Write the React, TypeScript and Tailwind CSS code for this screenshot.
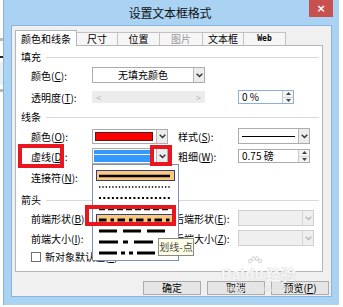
import React from 'react';

const F = "font-['Noto_Sans_CJK_SC','Noto_Sans',sans-serif]";

function Acc({ t, k, colon = true }: { t: string; k: string; colon?: boolean }) {
  return (
    <span className="whitespace-nowrap leading-none">
      {t}(<span className="underline underline-offset-1">{k}</span>){colon ? ':' : ''}
    </span>
  );
}

function Chevron({ color = '#333' }: { color?: string }) {
  return (
    <svg width="7" height="5" viewBox="0 0 7 5">
      <path d="M0.7 0.8 L3.5 3.6 L6.3 0.8" fill="none" stroke={color} strokeWidth="1.4" />
    </svg>
  );
}

function ArrowBtn({ disabled = false }: { disabled?: boolean }) {
  return (
    <div
      className={
        disabled
          ? 'w-[11px] h-full flex items-center justify-center border-l border-[#d6d6d6]'
          : 'w-[11px] h-full flex items-center justify-center border-l border-[#b8b8b8] bg-[#ececec]'
      }
    >
      <Chevron color={disabled ? '#b8b8b8' : '#333'} />
    </div>
  );
}

function SpinBtns() {
  return (
    <div className="w-[11px] h-full flex flex-col border-l border-[#c8c8c8] bg-[#f4f4f4]">
      <div className="flex-1 flex items-center justify-center border-b border-[#d4d4d4]">
        <svg width="5" height="3" viewBox="0 0 5 3"><path d="M0 3 L2.5 0 L5 3Z" fill="#444" /></svg>
      </div>
      <div className="flex-1 flex items-center justify-center">
        <svg width="5" height="3" viewBox="0 0 5 3"><path d="M0 0 L2.5 3 L5 0Z" fill="#444" /></svg>
      </div>
    </div>
  );
}

function Section({ t }: { t: string }) {
  return (
    <div className="h-[14px] flex items-center pl-[5px] pr-[3px]">
      <span className="leading-none">{t}</span>
      <div className="flex-1 ml-[5px] h-px bg-[#d9d9d9]" />
    </div>
  );
}

function Tab({ t, sel = false, w, dim = false, web = false }: { t: string; sel?: boolean; w: string; dim?: boolean; web?: boolean }) {
  return (
    <div
      className={
        (sel
          ? 'h-[16px] -mb-px bg-white border border-b-0 border-[#b4b4b4] relative z-10 '
          : 'h-[13px] bg-[#f6f6f6] border border-b-0 border-l-0 border-[#c2c2c2] ') +
        w +
        ' flex items-center justify-center'
      }
    >
      <span
        className={
          web
            ? "font-['DejaVu_Sans_Mono',monospace] font-bold text-[8px] leading-none"
            : dim
            ? 'text-[#9a9a9a] leading-none'
            : 'leading-none'
        }
      >
        {t}
      </span>
    </div>
  );
}

type Pat = { dash?: string; w: number; hl?: boolean };
const pats: Pat[] = [
  { w: 2.5, hl: true },
  { dash: '1.4 1.9', w: 1.6 },
  { dash: '2 2.3', w: 2 },
  { dash: '6 3', w: 2.5 },
  { dash: '7.5 4 3.5 3.5', w: 3, hl: true },
  { dash: '18 6', w: 3 },
  { dash: '19 5 5 6', w: 3 },
  { dash: '18 4 4 4 4 4', w: 3 },
];

function DropList() {
  return (
    <div className="absolute left-[92px] top-[164px] w-[87px] h-[97px] bg-white border border-[#7d8fb5] flex flex-col pt-[5px] px-[3px]">
      {pats.map((p, i) => (
        <div
          key={i}
          className={
            p.hl
              ? 'h-[11px] flex items-center px-[2px] bg-[#fbc87c] border border-[#34407a]'
              : 'h-[11px] flex items-center px-[3px]'
          }
        >
          <svg width="71" height="4" viewBox="0 0 71 4">
            <line x1="0" y1="2" x2="71" y2="2" stroke="#000" strokeWidth={p.w} strokeDasharray={p.dash} />
          </svg>
        </div>
      ))}
    </div>
  );
}

export default function App() {
  return (
    <div className={`relative w-[343px] h-[307px] bg-white overflow-hidden flex ${F} text-[10px] text-black`}>
      {/* document strip behind the dialog */}
      <div className="w-[3px] h-full flex flex-col bg-white">
        <div className="h-[38px]" />
        <div className="h-[3px] bg-[#b8b8b8]" />
        <div className="h-[15px]" />
        <div className="h-[2px] bg-[#222]" />
        <div className="h-[4px]" />
        <div className="h-[23px] bg-[#e6f0fa]" />
        <div className="h-[4px]" />
        <div className="h-[3px] bg-[#b8b8b8]" />
      </div>

      {/* window */}
      <div className="w-[336px] h-[305px] bg-[#a9d2f3] border-l border-[#83b6e2] flex flex-col">
        <div className="relative h-[25px] flex items-center justify-center">
          <span className="text-[12px] leading-none text-[#111] tracking-[-0.2px] mr-[3px]">设置文本框格式</span>
          <div className="absolute right-[6px] top-0 w-[24px] h-[17px] bg-[#c8504f] flex items-center justify-center">
            <span className="text-white text-[11px] font-bold leading-none font-['DejaVu_Sans',sans-serif]">×</span>
          </div>
        </div>

        <div className="ml-[7px] w-[321px] h-[272px] bg-[#f0f0f0] border border-[#86b5df] flex flex-col pl-[3px] pt-[4px]">
          {/* tabs */}
          <div className="h-[15px] flex items-end">
            <Tab t="颜色和线条" sel w="w-[62px]" />
            <Tab t="尺寸" w="w-[41px]" />
            <Tab t="位置" w="w-[42px]" />
            <Tab t="图片" w="w-[43px]" dim />
            <Tab t="文本框" w="w-[41px]" />
            <Tab t="Web" w="w-[42px]" web />
          </div>

          {/* panel */}
          <div className="w-[308px] h-[227px] bg-white border border-[#b6b6b6] flex flex-col pt-[4px]">
            <Section t="填充" />

            <div className="mt-[3px] h-[16px] flex items-center">
              <div className="w-[76px] pl-[15px]"><Acc t="颜色" k="C" /></div>
              <div className="w-[113px] h-[16px] border border-[#acacac] bg-white flex">
                <div className="flex-1 flex items-center justify-center"><span className="leading-none">无填充颜色</span></div>
                <ArrowBtn />
              </div>
            </div>

            <div className="mt-[6px] h-[16px] flex items-center">
              <div className="w-[76px] pl-[15px]"><Acc t="透明度" k="T" /></div>
              <div className="w-[113px] h-[12px] bg-[#ececec] flex items-center justify-between px-[4px] text-[#b4b4b4]">
                <span className="leading-none text-[9px]">&lt;</span>
                <span className="leading-none text-[9px]">&gt;</span>
              </div>
              <div className="ml-[33px] w-[56px] h-[14px] bg-white border border-[#8fb0d6] flex">
                <div className="flex-1 flex items-center pl-[3px]"><span className="leading-none whitespace-pre">0 %</span></div>
                <SpinBtns />
              </div>
            </div>

            <div className="mt-[5px]"><Section t="线条" /></div>

            <div className="mt-[4px] h-[16px] flex items-center">
              <div className="w-[76px] pl-[15px]"><Acc t="颜色" k="O" /></div>
              <div className="w-[76px] h-[15px] border border-[#acacac] bg-white flex">
                <div className="flex-1 p-[2px] pr-[3px]"><div className="w-full h-full bg-[#ff0000] border border-[#5a1a1a]" /></div>
                <ArrowBtn />
              </div>
              <div className="ml-[10px] w-[60px]"><Acc t="样式" k="S" /></div>
              <div className="w-[72px] h-[16px] border border-[#acacac] bg-white flex">
                <div className="flex-1 flex items-center px-[3px]"><div className="w-full h-px bg-black" /></div>
                <ArrowBtn />
              </div>
            </div>

            <div className="mt-[4px] h-[16px] flex items-center">
              <div className="w-[76px] pl-[15px]"><Acc t="虚线" k="D" /></div>
              <div className="w-[76px] h-[16px] border border-[#acacac] bg-white flex">
                <div className="flex-1 p-px pr-[2px]">
                  <div className="w-full h-full bg-[#3399ff] flex flex-col pt-[4px]"><div className="h-px bg-white" /></div>
                </div>
                <ArrowBtn />
              </div>
              <div className="ml-[10px] w-[60px]"><Acc t="粗细" k="W" /></div>
              <div className="w-[72px] h-[14px] border border-[#acacac] bg-white flex">
                <div className="flex-1 flex items-center pl-[3px]"><span className="leading-none">0.75 磅</span></div>
                <SpinBtns />
              </div>
            </div>

            <div className="mt-[5px] h-[16px] flex items-center">
              <div className="w-[76px] pl-[15px]"><Acc t="连接符" k="N" /></div>
            </div>

            <div className="mt-[8px]"><Section t="箭头" /></div>

            <div className="mt-[3px] h-[16px] flex items-center">
              <div className="w-[76px] pl-[15px]"><Acc t="前端形状" k="B" /></div>
              <div className="ml-[82px] w-[64px]"><Acc t="后端形状" k="E" /></div>
              <div className="w-[76px] h-[16px] border border-[#cfcfcf] bg-[#efefef] flex">
                <div className="flex-1" />
                <ArrowBtn disabled />
              </div>
            </div>

            <div className="mt-[4px] h-[16px] flex items-center">
              <div className="w-[76px] pl-[15px]"><Acc t="前端大小" k="I" /></div>
              <div className="ml-[82px] w-[64px]"><Acc t="后端大小" k="Z" /></div>
              <div className="w-[76px] h-[16px] border border-[#cfcfcf] bg-[#efefef] flex">
                <div className="flex-1" />
                <ArrowBtn disabled />
              </div>
            </div>

            <div className="mt-[3px] h-[16px] flex items-center pl-[15px]">
              <div className="w-[10px] h-[10px] border border-[#707070] bg-white" />
              <span className="ml-[4px] leading-none"><Acc t="新对象默认值" k="F" colon={false} /></span>
            </div>
          </div>

          {/* buttons */}
          <div className="mt-[9px] h-[14px] flex justify-end gap-[6px] pr-[2px]">
            <div className="w-[58px] h-full bg-[#e5e5e5] border border-[#acacac] flex items-center justify-center"><span className="leading-none">确定</span></div>
            <div className="w-[58px] h-full bg-[#e5e5e5] border border-[#acacac] flex items-center justify-center"><span className="leading-none">取消</span></div>
            <div className="w-[58px] h-full bg-[#e5e5e5] border border-[#acacac] flex items-center justify-center"><Acc t="预览" k="P" colon={false} /></div>
          </div>
        </div>
      </div>

      {/* open dropdown list */}
      <DropList />

      {/* tooltip */}
      <div className="absolute left-[158px] top-[238px] w-[36px] h-[18px] bg-[#ffffe6] border border-[#8a8a8a] flex items-center justify-center">
        <span className="leading-none text-[#4a4a4a]">划线-点</span>
      </div>

      {/* red annotation boxes */}
      <div className="absolute left-[18px] top-[144px] w-[46px] h-[24px] border-[4px] border-[#e8161f]" />
      <div className="absolute left-[150px] top-[145px] w-[22px] h-[21px] border-[4px] border-[#e8161f]" />
      <div className="absolute left-[85px] top-[205px] w-[91px] h-[21px] border-[4px] border-[#e8161f]" />

      {/* watermark */}
      <div className="absolute left-[221px] top-[256px] flex flex-col items-start pointer-events-none text-[#f8f8f8] [text-shadow:0_0_1px_#bdbdbd]">
        <div className="flex items-end font-['Liberation_Sans',sans-serif] font-bold text-[15px] leading-none">
          <span>Bai</span>
          <div className="flex flex-col items-center ml-[1px]">
            <svg width="16" height="10" viewBox="0 0 16 10">
              <g fill="#f8f8f8" stroke="#c0c0c0" strokeWidth="0.6">
                <ellipse cx="3" cy="5" rx="1.6" ry="2" />
                <ellipse cx="6.5" cy="2.5" rx="1.6" ry="2" />
                <ellipse cx="10" cy="2.5" rx="1.6" ry="2" />
                <ellipse cx="13" cy="5" rx="1.6" ry="2" />
              </g>
            </svg>
            <span>du</span>
          </div>
          <span className={`${F} ml-[2px] text-[15px]`}>经验</span>
        </div>
        <span className="ml-[5px] mt-[4px] text-[8px] leading-none font-['Liberation_Sans',sans-serif]">jingyan.baidu.com</span>
      </div>
    </div>
  );
}
